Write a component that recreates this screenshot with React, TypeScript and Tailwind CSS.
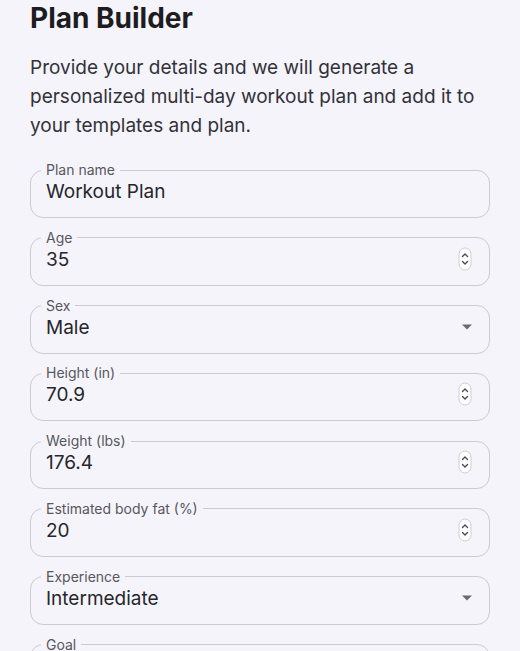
import React from "react";

type Kind = "text" | "number" | "select";

const fields: { label: string; value: string; kind: Kind }[] = [
  { label: "Plan name", value: "Workout Plan", kind: "text" },
  { label: "Age", value: "35", kind: "number" },
  { label: "Sex", value: "Male", kind: "select" },
  { label: "Height (in)", value: "70.9", kind: "number" },
  { label: "Weight (lbs)", value: "176.4", kind: "number" },
  { label: "Estimated body fat (%)", value: "20", kind: "number" },
  { label: "Experience", value: "Intermediate", kind: "select" },
  { label: "Goal", value: "Build muscle", kind: "select" },
  { label: "Days per week", value: "4", kind: "number" },
];

function Spinner() {
  return (
    <svg width="14" height="24" viewBox="0 0 14 24">
      <rect x="1" y="1" width="12" height="22" rx="6" fill="#ffffff" stroke="#cfced4" strokeWidth="1" />
      <path d="M4.5 9.5 L7 7 L9.5 9.5" fill="none" stroke="#4a4a50" strokeWidth="1.4" strokeLinecap="round" strokeLinejoin="round" />
      <path d="M4.5 14.5 L7 17 L9.5 14.5" fill="none" stroke="#4a4a50" strokeWidth="1.4" strokeLinecap="round" strokeLinejoin="round" />
    </svg>
  );
}

function Caret() {
  return (
    <svg width="12" height="6" viewBox="0 0 12 6" className="mr-[-1px]">
      <path d="M1 0.5 L11 0.5 L6 5.5 Z" fill="#6a6a70" />
    </svg>
  );
}

function Field({ label, value, kind }: { label: string; value: string; kind: Kind }) {
  return (
    <fieldset className="border border-[#cbcad1] rounded-[13px] pl-[15px] pr-[17px] pb-[12px]">
      <legend className="ml-[-5px] px-[5px] text-[14px] leading-[14px] text-[#57575e]">{label}</legend>
      <div className="flex items-center justify-between h-[28px]">
        <span className="text-[19px] leading-[28px] text-[#26262b] translate-y-[1px]">{value}</span>
        {kind === "number" && <Spinner />}
        {kind === "select" && <Caret />}
      </div>
    </fieldset>
  );
}

export default function App() {
  return (
    <div
      className="min-h-screen bg-[#f5f4fb] px-[30px] pt-[2px] pb-10"
      style={{ fontFamily: "Inter, 'Noto Sans', sans-serif" }}
    >
      <h1 className="text-[28px] leading-[32px] font-bold text-[#1c1c21]">Plan Builder</h1>
      <p className="mt-[19px] text-[19px] leading-[29px] text-[#323238]">
        Provide your details and we will generate a personalized multi-day workout plan and add it to your templates and plan.
      </p>
      <div className="mt-[23px] flex flex-col gap-[12.8px]">
        {fields.map((f) => (
          <Field key={f.label} {...f} />
        ))}
      </div>
    </div>
  );
}
